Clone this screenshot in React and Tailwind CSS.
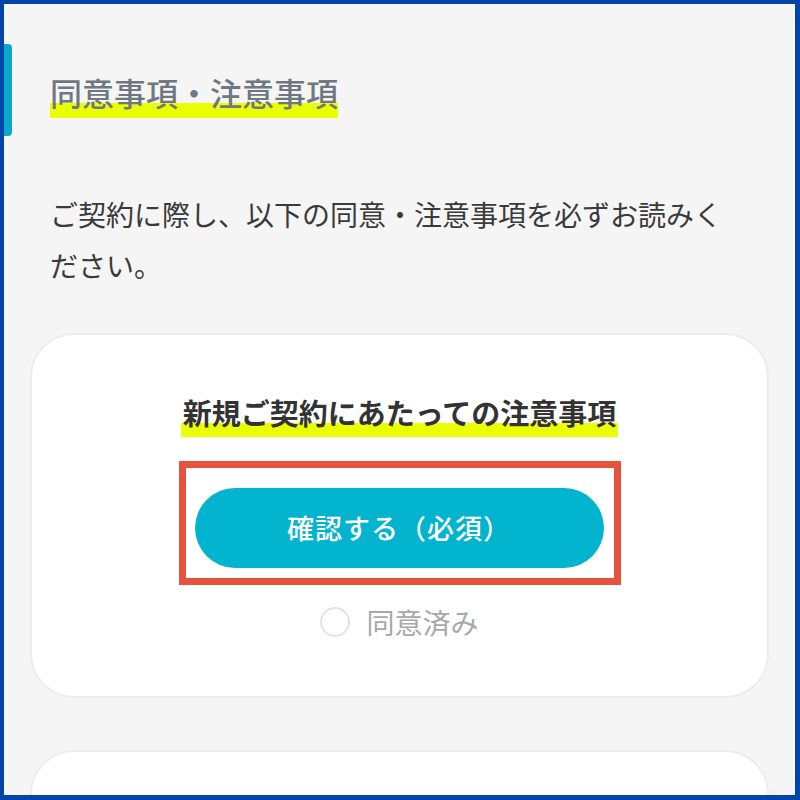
import React from 'react';

const jp = { fontFamily: '"Noto Sans CJK JP", "Noto Sans", sans-serif' };

const Marker = ({ children, className = '' }) => (
  <span
    className={`inline-block leading-none pb-[10px] bg-[linear-gradient(transparent_64%,#eaff00_64%)] ${className}`}
  >
    {children}
  </span>
);

const NoticeCard = () => (
  <div className="mx-[26px] h-[365px] rounded-[44px] border-2 border-[#ececec] bg-white flex flex-col items-center pt-[56px]">
    <h3 className="text-[29px] font-bold text-[#333]">
      <Marker className="px-[2px]">新規ご契約にあたっての注意事項</Marker>
    </h3>

    <div className="mt-[24px] border-[7px] border-[#e5533d] w-[442px] pt-[20px] pb-[10px] pl-[9px] pr-[10px]">
      <button className="w-full h-[80px] rounded-full bg-[#02b4cd] text-white text-[27px] font-medium tracking-[1px]">
        確認する（必須）
      </button>
    </div>

    <label className="mt-[16px] flex items-center gap-[16px] text-[28px] text-[#a8a8a8]">
      <span className="w-[30px] h-[30px] rounded-full border-2 border-[#e2e2e2] bg-white" />
      同意済み
    </label>
  </div>
);

export default function App() {
  return (
    <div
      className="w-[800px] h-[800px] overflow-hidden bg-[#f5f5f5] border-[#0046aa] border-t-4 border-l-4 border-r-[5px] border-b-[5px]"
      style={jp}
    >
      {/* section heading with side tab */}
      <div className="flex items-center mt-[40px]">
        <div className="w-[8px] h-[92px] rounded-r-[4px] bg-[#0aa9c9]" />
        <h2 className="pl-[38px] pt-[6px] text-[32px] font-medium text-[#6f7781]">
          <Marker>同意事項・注意事項</Marker>
        </h2>
      </div>

      <p className="mt-[53px] pl-[46px] w-[740px] text-[28px] leading-[51px] text-[#3a3a3a]">
        ご契約に際し、以下の同意・注意事項を必ずお読みください。
      </p>

      <div className="mt-[42px] flex flex-col gap-[52px]">
        <NoticeCard />
        <div className="mx-[26px] h-[200px] rounded-[44px] border-2 border-[#ececec] bg-white" />
      </div>
    </div>
  );
}
